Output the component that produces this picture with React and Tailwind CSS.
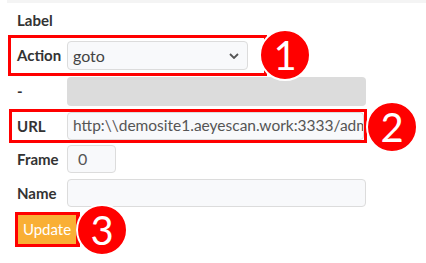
import React from 'react';

const font = { fontFamily: 'Lato, "Noto Sans", sans-serif' };

const Badge = ({ n, className }) => (
  <div
    className={`absolute flex h-[52px] w-[52px] items-center justify-center rounded-full border-2 border-white bg-[#ff0000] text-[40px] leading-none text-white ${className}`}
  >
    {n}
  </div>
);

export default function App() {
  return (
    <div className="relative h-[263px] w-[426px] overflow-hidden bg-white text-[15px] text-[#333]" style={font}>
      <div className="ml-[7px] h-[3px] bg-[#f4f4f4]" />

      <div className="flex flex-col">
        {/* Label */}
        <div className="flex h-[32px] items-center pl-[17px] pt-[2px] font-bold">Label</div>

        {/* Action */}
        <div className="ml-[8px] flex h-[41px] w-[259px] items-center border-[3px] border-[#ff0000] pl-[6px]">
          <span className="w-[50px] font-bold">Action</span>
          <div className="flex h-[29px] w-[181px] items-center justify-between rounded-[4px] border border-[#dcdcdc] bg-[#f8f9fb] pl-[5px] pr-[8px] text-[16px] text-[#444]">
            <span>goto</span>
            <svg width="10" height="6" viewBox="0 0 10 6" fill="none" stroke="#555" strokeWidth="1.8">
              <path d="M1 1l4 4 4-4" />
            </svg>
          </div>
        </div>

        {/* - */}
        <div className="mt-[1px] flex h-[29px] items-center pl-[17px]">
          <span className="w-[50px] font-bold">-</span>
          <div className="h-[29px] w-[299px] rounded-[4px] bg-[#dcdcdc]" />
        </div>

        {/* URL */}
        <div className="ml-[9px] mt-[3px] flex h-[34px] w-[358px] items-center border-[3px] border-[#ff0000] pl-[5px]">
          <span className="w-[50px] font-bold">URL</span>
          <div className="flex h-[28px] flex-1 items-center overflow-hidden whitespace-nowrap rounded-[4px] border border-[#dcdcdc] bg-[#f8f9fb] pl-[5px] text-[15.5px] text-[#555]">
            http:\\demosite1.aeyescan.work:3333/admin
          </div>
        </div>

        {/* Frame */}
        <div className="mt-[2px] flex h-[28px] items-center pl-[17px]">
          <span className="w-[50px] font-bold">Frame</span>
          <div className="flex h-[28px] w-[49px] items-center rounded-[4px] border border-[#dcdcdc] bg-[#f8f9fb] pl-[10px] text-[16px] text-[#555]">
            0
          </div>
        </div>

        {/* Name */}
        <div className="mt-[6px] flex h-[28px] items-center pl-[17px]">
          <span className="w-[50px] font-bold">Name</span>
          <div className="h-[28px] w-[299px] rounded-[4px] border border-[#dcdcdc] bg-[#f8f9fb]" />
        </div>

        {/* Update */}
        <div className="ml-[15px] mt-[5px] flex h-[35px] w-[65px] items-stretch border-[3px] border-[#ff0000] bg-[#ff0000] pr-[1px]">
          <button className="flex flex-1 items-center justify-center bg-[#f9af35] text-[15px] text-white">
            Update
          </button>
        </div>
      </div>

      <Badge n="1" className="left-[259px] top-[29px]" />
      <Badge n="2" className="left-[366px] top-[101px]" />
      <Badge n="3" className="left-[76px] top-[204px]" />
    </div>
  );
}
